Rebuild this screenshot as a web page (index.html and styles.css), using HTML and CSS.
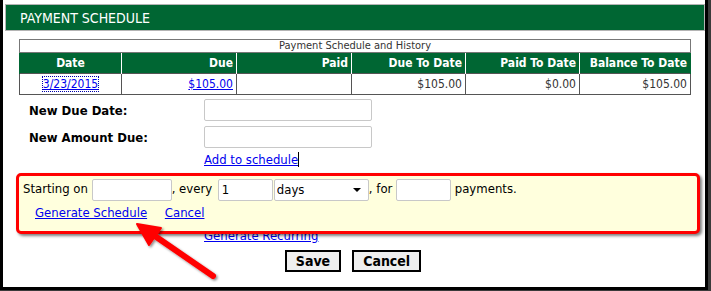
FILE: index.html
```html
<!DOCTYPE html>
<html lang="en">
<head>
    <meta charset="UTF-8">
    <title>Payment Schedule</title>
    <link rel="stylesheet" href="styles.css">
</head>
<body>
    <div class="frame">
        <div class="title-bar">PAYMENT SCHEDULE</div>

        <div class="content">
            <table class="schedule">
                <tr>
                    <td colspan="6" class="caption">Payment Schedule and History</td>
                </tr>
                <tr>
                    <th class="center">Date</th>
                    <th>Due</th>
                    <th>Paid</th>
                    <th>Due To Date</th>
                    <th>Paid To Date</th>
                    <th>Balance To Date</th>
                </tr>
                <tr>
                    <td class="center"><a href="#" class="focused">3/23/2015</a></td>
                    <td><a href="#">$105.00</a></td>
                    <td></td>
                    <td>$105.00</td>
                    <td>$0.00</td>
                    <td>$105.00</td>
                </tr>
            </table>

            <div class="new-due">
                <label for="dueDate">New Due Date:</label>
                <input type="text" id="dueDate">
                <label for="amountDue">New Amount Due:</label>
                <input type="text" id="amountDue">
            </div>

            <div class="link-line"><a href="#">Add to schedule</a><span class="caret"></span></div>
            <div class="link-line recurring"><a href="#">Generate Recurring</a></div>

            <div class="buttons">
                <button>Save</button>
                <button>Cancel</button>
            </div>
        </div>

        <div class="recurring-panel">
            <div class="panel-row">
                Starting on <input type="text" class="start">, every <input type="text" class="every" value="1"><span class="select-wrap"><select class="unit">
                    <option>days</option>
                    <option>weeks</option>
                    <option>months</option>
                </select></span>, for <input type="text" class="count"> payments.
            </div>
            <div class="panel-links">
                <a href="#">Generate Schedule</a>
                <a href="#">Cancel</a>
            </div>
        </div>

        <svg class="arrow" width="708" height="290" viewBox="0 0 708 290">
            <defs>
                <filter id="shade" x="-20%" y="-20%" width="140%" height="140%">
                    <feDropShadow dx="1.5" dy="1.5" stdDeviation="1.2" flood-color="#000" flood-opacity="0.45"/>
                </filter>
            </defs>
            <g filter="url(#shade)">
                <line x1="213" y1="276" x2="152" y2="234" stroke="#f00" stroke-width="6" stroke-linecap="round"/>
                <polygon points="137,224 149,245 161,228" fill="#f00" stroke="#f00" stroke-width="2" stroke-linejoin="round"/>
            </g>
        </svg>
    </div>
</body>
</html>
```

FILE: styles.css
```css
body {
    margin: 0;
    background: #3a3a3a;
    font-family: "DejaVu Sans Condensed", "DejaVu Sans", sans-serif;
    font-size: 13px;
    color: #000;
}
.frame {
    position: relative;
    box-sizing: border-box;
    width: 708px;
    height: 290px;
    background: #fff;
    border: 3px solid #000;
    border-top: none;
    padding: 4px 0 0 2px;
    overflow: hidden;
}
.title-bar {
    height: 25px;
    line-height: 26px;
    background: #006633;
    border: 1px solid #b4b4b4;
    color: #fff;
    font-size: 14px;
    padding-left: 14px;
}
.content {
    margin: 8px 14px 0 14px;
}
a {
    color: #0000ee;
}
.schedule {
    width: 672px;
    border-collapse: collapse;
    font-size: 12px;
}
.schedule .caption {
    border: 1px solid #777;
    text-align: center;
    font-size: 11px;
    height: 12px;
    line-height: 12px;
    padding: 0;
}
.schedule th {
    background: #006633;
    color: #fff;
    font-weight: bold;
    text-align: right;
    height: 20px;
    padding: 0 3px;
    border: 1px solid #fff;
    border-top: none;
    border-bottom: none;
}
.schedule th:first-child {
    border-left-color: #006633;
}
.schedule th:last-child {
    border-right-color: #006633;
}
.schedule th:nth-child(1) { width: 95px; }
.schedule th:nth-child(2) { width: 108px; }
.schedule th:nth-child(3) { width: 108px; }
.schedule th:nth-child(4) { width: 107px; }
.schedule th:nth-child(5) { width: 107px; }
.schedule td {
    border: 1px solid #555;
    text-align: right;
    height: 20px;
    padding: 0 3px;
    color: #333;
}
.schedule .center {
    text-align: center;
}
.focused {
    outline: 1px dotted #00a;
    outline-offset: 0;
}
.new-due {
    display: grid;
    grid-template-columns: 175px 168px;
    row-gap: 5px;
    align-items: center;
    margin-top: 4px;
    padding-left: 10px;
}
.new-due label {
    font-weight: bold;
    font-size: 13px;
}
input, select {
    box-sizing: border-box;
    height: 22px;
    border: 1px solid #c8c8c8;
    border-radius: 2px;
    background: #fff;
    font-family: inherit;
    font-size: 13px;
    padding: 0 3px;
    vertical-align: middle;
}
.link-line {
    margin-left: 185px;
    margin-top: 4px;
    line-height: 16px;
}
.caret {
    display: inline-block;
    width: 1px;
    height: 15px;
    background: #000;
    vertical-align: -3px;
}
.recurring {
    margin-top: 60px;
}
.buttons {
    display: flex;
    justify-content: center;
    gap: 11px;
    margin-top: 6px;
    margin-left: -4px;
}
.buttons button {
    height: 22px;
    padding: 0 9px;
    border: 2px solid #000;
    background: #efefef;
    font-family: inherit;
    font-weight: bold;
    font-size: 14px;
    line-height: 16px;
}
.recurring-panel {
    position: absolute;
    left: 13px;
    top: 173px;
    box-sizing: border-box;
    width: 684px;
    height: 61px;
    border: 3px solid #ff0000;
    border-radius: 5px;
    background: #ffffdd;
    box-shadow: 2px 2px 3px rgba(0, 0, 0, 0.5);
    padding: 2px 4px 0 4px;
}
.panel-row {
    height: 22px;
    line-height: 22px;
}
.panel-row .start { width: 80px; }
.panel-row .every { width: 55px; margin-left: 2px; }
.panel-row .count { width: 55px; }
.select-wrap {
    position: relative;
    display: inline-block;
    margin-left: 1px;
    vertical-align: middle;
}
.select-wrap .unit {
    display: block;
    width: 95px;
    padding: 0 2px;
    appearance: none;
    -webkit-appearance: none;
}
.select-wrap::after {
    content: "";
    position: absolute;
    right: 8px;
    top: 9px;
    border-left: 4px solid transparent;
    border-right: 4px solid transparent;
    border-top: 4px solid #000;
    pointer-events: none;
}
.panel-links {
    margin-top: 5px;
    padding-left: 12px;
    line-height: 16px;
}
.panel-links a + a {
    margin-left: 14px;
}
.arrow {
    position: absolute;
    left: -3px;
    top: 0;
    pointer-events: none;
}
```
